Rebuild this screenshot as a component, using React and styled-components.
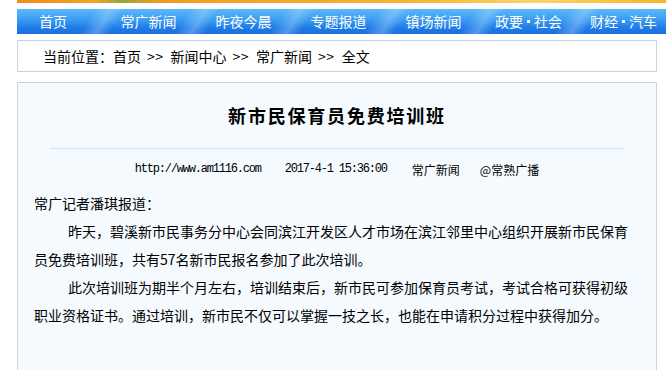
import React from "react";
import styled, { createGlobalStyle } from "styled-components";

const Global = createGlobalStyle`
  html, body { margin: 0; padding: 0; background: #ffffff; overflow: hidden; }
  body { font-family: "Noto Sans CJK SC", "Noto Sans", sans-serif; color: #000; }
`;

const Page = styled.div`
  padding-left: 17px;
  width: 649px;
  overflow: hidden;
`;

const Banner = styled.div`
  height: 3px;
  background: linear-gradient(90deg, #f08a1c 0%, #f6a223 12%, #9aa43a 16%, #f49a20 22%, #f7b238 60%, #fbd36a 80%, #f6b52c 100%);
`;

const Nav = styled.nav`
  margin-top: 6px;
  height: 25px;
  display: flex;
  background: linear-gradient(180deg, #5cb8f9 0%, #3a9af2 45%, #1f7ce6 75%, #1a70de 100%);
  overflow: hidden;
`;

const NavItem = styled.a`
  position: relative;
  flex: none;
  width: ${(p) => (p.$first ? "84px" : "95px")};
  padding-right: ${(p) => (p.$first ? "12px" : "0")};
  box-sizing: border-box;
  display: flex;
  align-items: center;
  justify-content: center;
  color: #ffffff;
  font-size: 14px;
  line-height: 25px;
  text-decoration: none;
  white-space: nowrap;
  &::before {
    content: "";
    display: ${(p) => (p.$first ? "none" : "block")};
    position: absolute;
    top: 0;
    bottom: 0;
    left: -14px;
    width: 30px;
    transform: skewX(-32deg);
    background: linear-gradient(90deg, rgba(255,255,255,0) 0%, rgba(190,225,255,0.35) 55%, rgba(255,255,255,0) 100%);
  }
`;

const NavLabel = styled.span`
  position: relative;
`;

const NavDot = styled.span`
  position: relative;
  display: inline-block;
  width: 3px;
  height: 3px;
  margin: 0 4px;
  background: #ffffff;
  vertical-align: middle;
`;

const Crumb = styled.div`
  margin-top: 6px;
  width: 640px;
  height: 32px;
  box-sizing: border-box;
  border: 1px solid #c6d4e4;
  background: #ffffff;
  display: flex;
  align-items: center;
  padding-left: 25px;
  font-size: 14px;
  color: #000;
  white-space: nowrap;
`;

const CrumbSep = styled.span`
  margin: 0 7px 0 6px;
  letter-spacing: 0.5px;
`;

const Article = styled.div`
  margin-top: 10px;
  width: 640px;
  min-height: 320px;
  box-sizing: border-box;
  border: 1px solid #c6d4e4;
  border-bottom: none;
  background: #f5faff;
  padding: 19px 16px 0 16px;
`;

const Title = styled.h1`
  margin: 0;
  text-align: center;
  font-size: 18px;
  line-height: 26px;
  font-weight: bold;
  letter-spacing: 1.8px;
  color: #000;
`;

const Divider = styled.hr`
  margin: 20px 16px 0 16px;
  border: none;
  border-top: 1px solid #cfe2f6;
  height: 0;
`;

const Meta = styled.div`
  display: flex;
  justify-content: center;
  align-items: center;
  height: 20px;
  margin-top: 10px;
  font-size: 12px;
  white-space: nowrap;
`;

const MetaItem = styled.span`
  margin-left: ${(p) => p.$gap || 0}px;
  font-family: ${(p) => (p.$mono ? '"Liberation Mono", monospace' : '"Noto Sans CJK SC", sans-serif')};
  letter-spacing: ${(p) => (p.$mono ? "-1.2px" : "0")};
`;

const Body = styled.div`
  margin-top: 10px;
  font-size: 14px;
  line-height: 28px;
`;

const Para = styled.p`
  margin: 0;
  text-indent: ${(p) => (p.$indent ? "34px" : "0")};
`;

const navItems = ["首页", "常广新闻", "昨夜今晨", "专题报道", "镇场新闻", "政要·社会", "财经·汽车"];
const crumbs = ["首页", "新闻中心", "常广新闻", "全文"];

export default function App() {
  return (
    <>
      <Global />
      <Page>
        <Banner />
        <Nav>
          {navItems.map((t, i) => {
            const parts = t.split("·");
            return (
              <NavItem key={t} $first={i === 0} href="#">
                <NavLabel>{parts[0]}</NavLabel>
                {parts[1] && <NavDot />}
                {parts[1] && <NavLabel>{parts[1]}</NavLabel>}
              </NavItem>
            );
          })}
        </Nav>
        <Crumb>
          当前位置：
          {crumbs.map((c, i) => (
            <React.Fragment key={c}>
              {i > 0 && <CrumbSep>&gt;&gt;</CrumbSep>}
              {c}
            </React.Fragment>
          ))}
        </Crumb>
        <Article>
          <Title>新市民保育员免费培训班</Title>
          <Divider />
          <Meta>
            <MetaItem $mono>http://www.am1116.com</MetaItem>
            <MetaItem $mono $gap={24}>2017-4-1 15:36:00</MetaItem>
            <MetaItem $gap={25}>常广新闻</MetaItem>
            <MetaItem $gap={20}>@常熟广播</MetaItem>
          </Meta>
          <Body>
            <Para>常广记者潘琪报道：</Para>
            <Para $indent>
              昨天，碧溪新市民事务分中心会同滨江开发区人才市场在滨江邻里中心组织开展新市民保育员免费培训班，共有57名新市民报名参加了此次培训。
            </Para>
            <Para $indent>
              此次培训班为期半个月左右，培训结束后，新市民可参加保育员考试，考试合格可获得初级职业资格证书。通过培训，新市民不仅可以掌握一技之长，也能在申请积分过程中获得加分。
            </Para>
          </Body>
        </Article>
      </Page>
    </>
  );
}
